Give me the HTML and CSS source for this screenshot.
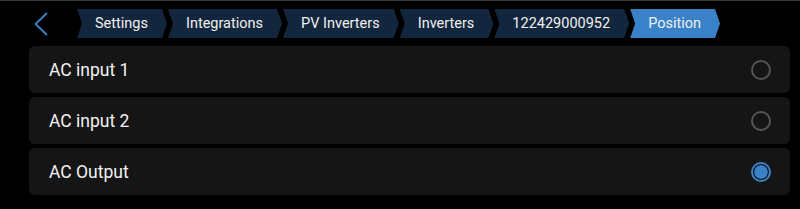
FILE: index.html
```html
<!DOCTYPE html>
<html lang="en">
<head>
  <meta charset="UTF-8">
  <meta name="viewport" content="width=device-width, initial-scale=1.0">
  <title>Position</title>
  <link rel="stylesheet" href="styles.css">
</head>
<body>
  <div class="page">
    <div class="header">
      <button class="back" type="button" aria-label="Back">
        <svg width="14" height="24" viewBox="0 0 14 24" fill="none" stroke="currentColor" stroke-width="1.8" stroke-linecap="round" stroke-linejoin="round">
          <polyline points="12.5,1.5 1.5,12 12.5,22.5"></polyline>
        </svg>
      </button>
      <div class="crumbs">
        <div class="crumb">Settings</div>
        <div class="crumb">Integrations</div>
        <div class="crumb">PV Inverters</div>
        <div class="crumb">Inverters</div>
        <div class="crumb">122429000952</div>
        <div class="crumb active">Position</div>
      </div>
    </div>

    <div class="list">
      <div class="row">
        <span>AC input 1</span>
        <span class="radio"></span>
      </div>
      <div class="row">
        <span>AC input 2</span>
        <span class="radio"></span>
      </div>
      <div class="row">
        <span>AC Output</span>
        <span class="radio checked"></span>
      </div>
    </div>
  </div>
</body>
</html>
```

FILE: styles.css
```css
body {
  margin: 0;
  padding: 0;
  background-color: #000;
  font-family: Roboto, "Noto Sans", sans-serif;
  color: #fff;
}
.page {
  border-top: 1px solid #3a3a3a;
  height: 208px;
}
.header {
  display: flex;
  align-items: center;
  height: 29px;
  padding-top: 8px;
}
.back {
  background: none;
  border: none;
  padding: 0;
  margin-left: 34px;
  width: 43px;
  height: 29px;
  display: flex;
  align-items: center;
  color: #3a82c8;
  cursor: pointer;
}
.crumbs {
  display: flex;
  height: 29px;
}
.crumb {
  display: flex;
  align-items: center;
  height: 29px;
  padding: 0 19px 0 18px;
  margin-right: 1px;
  font-size: 14.5px;
  color: #f0f0f0;
  background-color: #12263d;
  clip-path: polygon(0 0, calc(100% - 5px) 0, 100% 50%, calc(100% - 5px) 100%, 0 100%, 5px 50%);
}
.crumb.active {
  background-color: #3a82c8;
}
.list {
  display: flex;
  flex-direction: column;
  gap: 4px;
  margin: 8px 10px 0 29px;
}
.row {
  display: flex;
  align-items: center;
  justify-content: space-between;
  height: 47px;
  padding: 0 19px 0 20px;
  background-color: #151515;
  border-radius: 6px;
  font-size: 17.5px;
  color: #f2f2f2;
}
.radio {
  box-sizing: border-box;
  width: 20px;
  height: 20px;
  border: 2px solid #555;
  border-radius: 50%;
}
.radio.checked {
  border-color: #3a82c8;
  padding: 1px;
  background-color: #3a82c8;
  background-clip: content-box;
  box-shadow: inset 0 0 0 1px #151515;
}
```
